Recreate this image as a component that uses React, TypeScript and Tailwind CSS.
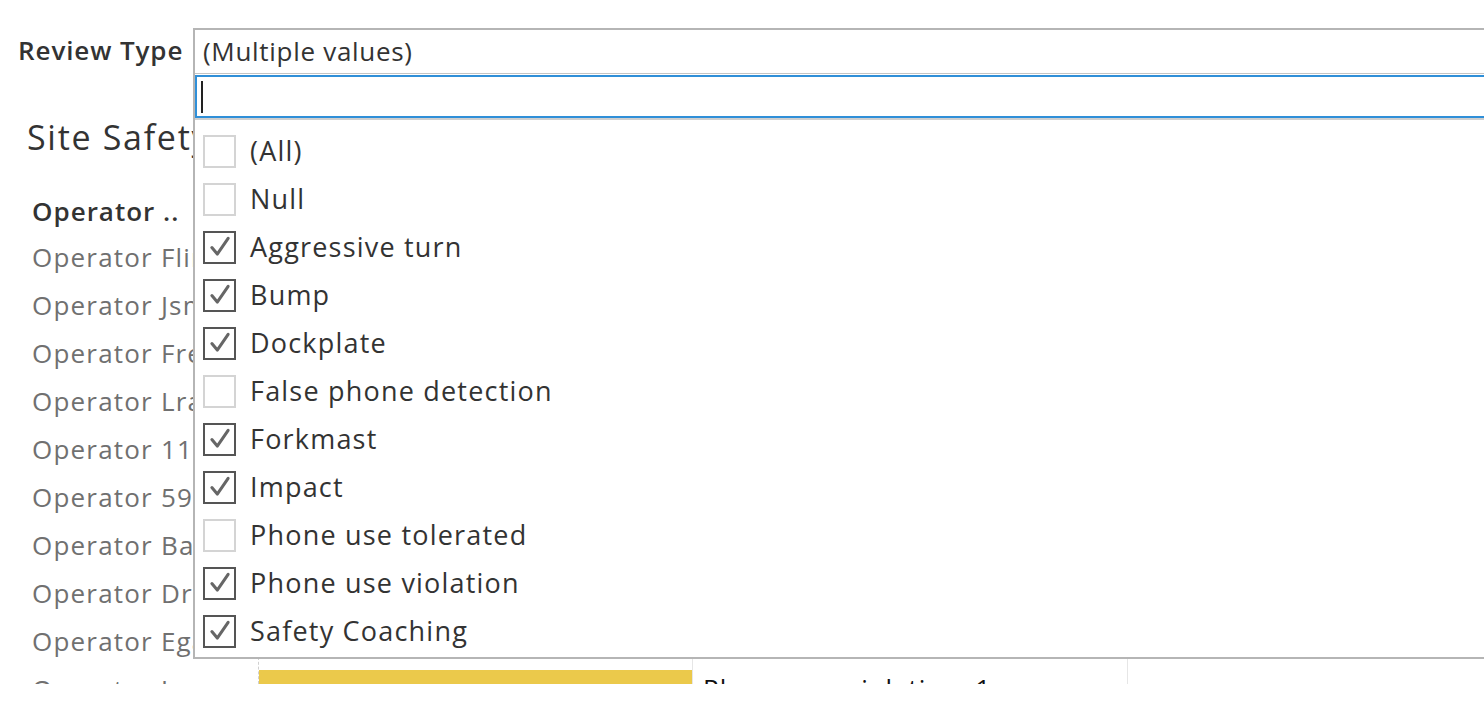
import React from "react";

const items: { label: string; checked: boolean }[] = [
  { label: "(All)", checked: false },
  { label: "Null", checked: false },
  { label: "Aggressive turn", checked: true },
  { label: "Bump", checked: true },
  { label: "Dockplate", checked: true },
  { label: "False phone detection", checked: false },
  { label: "Forkmast", checked: true },
  { label: "Impact", checked: true },
  { label: "Phone use tolerated", checked: false },
  { label: "Phone use violation", checked: true },
  { label: "Safety Coaching", checked: true },
];

const operators = [
  "Operator Flint",
  "Operator Jsmith",
  "Operator Fred",
  "Operator Lrand",
  "Operator 1124",
  "Operator 5923",
  "Operator Barry",
  "Operator Drew",
  "Operator Egan",
  "Operator Jane",
];

function Check({ checked }: { checked: boolean }) {
  return (
    <div
      className={
        "w-[33px] h-[33px] shrink-0 bg-white flex items-center justify-center " +
        (checked ? "border-2 border-[#555555]" : "border-2 border-[#d4d4d4]")
      }
    >
      {checked && (
        <svg width="26" height="26" viewBox="0 0 24 24" fill="none">
          <path
            d="M4.5 12.5 L9.5 18.5 L19.5 4"
            stroke="#666666"
            strokeWidth="2.8"
            strokeLinecap="round"
            strokeLinejoin="round"
          />
        </svg>
      )}
    </div>
  );
}

export default function App() {
  return (
    <div
      className="relative w-[1484px] h-[720px] bg-white overflow-hidden"
      style={{ fontFamily: '"Open Sans", "Noto Sans", sans-serif' }}
    >
      {/* Background dashboard */}
      <div className="h-[684px] overflow-hidden flex flex-col">
        <div className="h-[100px] shrink-0 pl-[18px] pt-[33px]">
          <div className="text-[26px] leading-[34px] font-semibold text-[#333333] tracking-[0.9px] whitespace-nowrap">
            Review Type
          </div>
        </div>
        <div className="pl-[27px] h-[90px] shrink-0">
          <div className="text-[34px] leading-[74px] text-[#333333] tracking-[1.7px] whitespace-nowrap">
            Site Safety Summary
          </div>
        </div>
        <div className="flex shrink-0">
          <div className="w-[226px] pl-[32px] flex flex-col">
            <div className="h-[43px] shrink-0 text-[26px] leading-[43px] font-semibold text-[#333333] tracking-[1px] whitespace-nowrap">
              Operator ..
            </div>
            {operators.map((o) => (
              <div
                key={o}
                className="h-[48px] shrink-0 text-[26px] leading-[48px] text-[#707070] tracking-[1.2px] whitespace-nowrap"
              >
                {o}
              </div>
            ))}
          </div>
          <div className="flex-1" />
        </div>
      </div>

      {/* bottom row of chart behind popup */}
      <div className="absolute left-[258px] top-[657px] h-[27px] flex">
        <div className="w-[434px] flex flex-col border-l border-dashed border-[#d0d0d0]">
          <div className="h-[13px]" />
          <div className="h-[14px] bg-[#ebc94b]" />
        </div>
        <div className="w-[435px] border-l border-[#e6e6e6] pl-[10px] overflow-hidden">
          <div className="text-[26px] leading-[26px] mt-[18px] text-[#111111] tracking-[1px] whitespace-nowrap">
            Phone use violation: 1
          </div>
        </div>
        <div className="w-[360px] border-l border-[#e6e6e6]" />
      </div>

      {/* Dropdown popup */}
      <div className="absolute left-[193px] top-[28px] right-[-4px] h-[631px] bg-white border-2 border-[#b5b5b5] flex flex-col">
        <div className="h-[44px] shrink-0 pl-[8px] flex items-center border-b-[1px] border-[#c4c4c4]">
          <span className="text-[26px] text-[#333333] tracking-[0.7px] whitespace-nowrap">
            (Multiple values)
          </span>
        </div>
        <div className="h-[43px] shrink-0 border-2 border-[#2f8fd8] mt-[1px] flex items-center pl-[4px]">
          <div className="w-[2px] h-[32px] bg-[#222222]" />
        </div>
        <div className="h-[2px] shrink-0 bg-[#cfcfcf]" />
        <div className="flex flex-col pt-[7px]">
          {items.map((it) => (
            <div key={it.label} className="h-[48px] shrink-0 flex items-center pl-[8px] gap-[14px]">
              <Check checked={it.checked} />
              <span className="text-[27px] text-[#333333] whitespace-nowrap tracking-[1.2px]">
                {it.label}
              </span>
            </div>
          ))}
        </div>
      </div>
    </div>
  );
}
